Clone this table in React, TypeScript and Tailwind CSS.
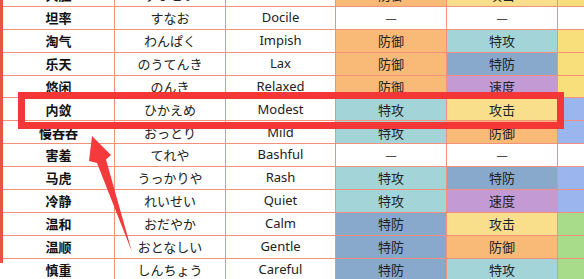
import React from 'react';

const C = {
  def: 'bg-[#f9b977]',
  spa: 'bg-[#a3d4d8]',
  spd: 'bg-[#88a9cc]',
  spe: 'bg-[#c39ad4]',
  atk: 'bg-[#f9df8b]',
  none: 'bg-white',
};

const S = {
  y: 'bg-[#f8df7c]',
  b: 'bg-[#9bb5ef]',
  g: 'bg-[#a8dc8b]',
  w: 'bg-white',
};

const label: Record<string, string> = {
  def: '防御',
  spa: '特攻',
  spd: '特防',
  spe: '速度',
  atk: '攻击',
  none: '—',
};

type Row = [string, string, string, keyof typeof C, keyof typeof C, keyof typeof S];

const rows: Row[] = [
  ['大胆', 'ずぶとい', 'Bold', 'def', 'atk', 'y'],
  ['坦率', 'すなお', 'Docile', 'none', 'none', 'w'],
  ['淘气', 'わんぱく', 'Impish', 'def', 'spa', 'y'],
  ['乐天', 'のうてんき', 'Lax', 'def', 'spd', 'y'],
  ['悠闲', 'のんき', 'Relaxed', 'def', 'spe', 'y'],
  ['内敛', 'ひかえめ', 'Modest', 'spa', 'atk', 'b'],
  ['慢吞吞', 'おっとり', 'Mild', 'spa', 'def', 'b'],
  ['害羞', 'てれや', 'Bashful', 'none', 'none', 'w'],
  ['马虎', 'うっかりや', 'Rash', 'spa', 'spd', 'b'],
  ['冷静', 'れいせい', 'Quiet', 'spa', 'spe', 'b'],
  ['温和', 'おだやか', 'Calm', 'spd', 'atk', 'g'],
  ['温顺', 'おとなしい', 'Gentle', 'spd', 'def', 'g'],
  ['慎重', 'しんちょう', 'Careful', 'spd', 'spa', 'g'],
];

const cell = 'flex items-center justify-center border-r border-[#f3917c] h-full';

const App = () => {
  return (
    <div className="relative w-[584px] h-[279px] overflow-hidden bg-white">
      {/* TABLE */}
      <div className="border-l-[3px] border-[#e9533f] h-full">
        <div className="-mt-[16px]">
          {rows.map(([cn, jp, en, a, b, s], i) => (
            <div
              key={i}
              className="grid grid-cols-[112px_111px_110px_111px_111px_1fr] h-[22.9px] border-b border-[#f3917c] text-[13px] text-[#222]"
            >
              <div className={`${cell} font-bold text-[#111] font-['Noto_Sans_CJK_SC',sans-serif]`}>{cn}</div>
              <div className={`${cell} font-['Noto_Sans_CJK_JP',sans-serif]`}>{jp}</div>
              <div className={`${cell} font-['Noto_Sans','Open_Sans',sans-serif]`}>{en}</div>
              <div className={`${cell} ${C[a]} font-['Noto_Sans_CJK_SC',sans-serif]`}>{label[a]}</div>
              <div className={`${cell} ${C[b]} font-['Noto_Sans_CJK_SC',sans-serif]`}>{label[b]}</div>
              <div className={`h-full ${S[s]}`} />
            </div>
          ))}
        </div>
      </div>

      {/* HIGHLIGHT BOX */}
      <div className="absolute left-[18px] top-[92px] w-[546px] h-[37px] border-[7px] border-[#f43636]" />

      {/* ARROW */}
      <svg className="absolute left-0 top-0" width="584" height="279" viewBox="0 0 584 279">
        <polygon
          points="92,136 111,155 106,159.5 132,252 97,163 89,161"
          fill="#f43a3a"
        />
      </svg>
    </div>
  );
};

export default App;
